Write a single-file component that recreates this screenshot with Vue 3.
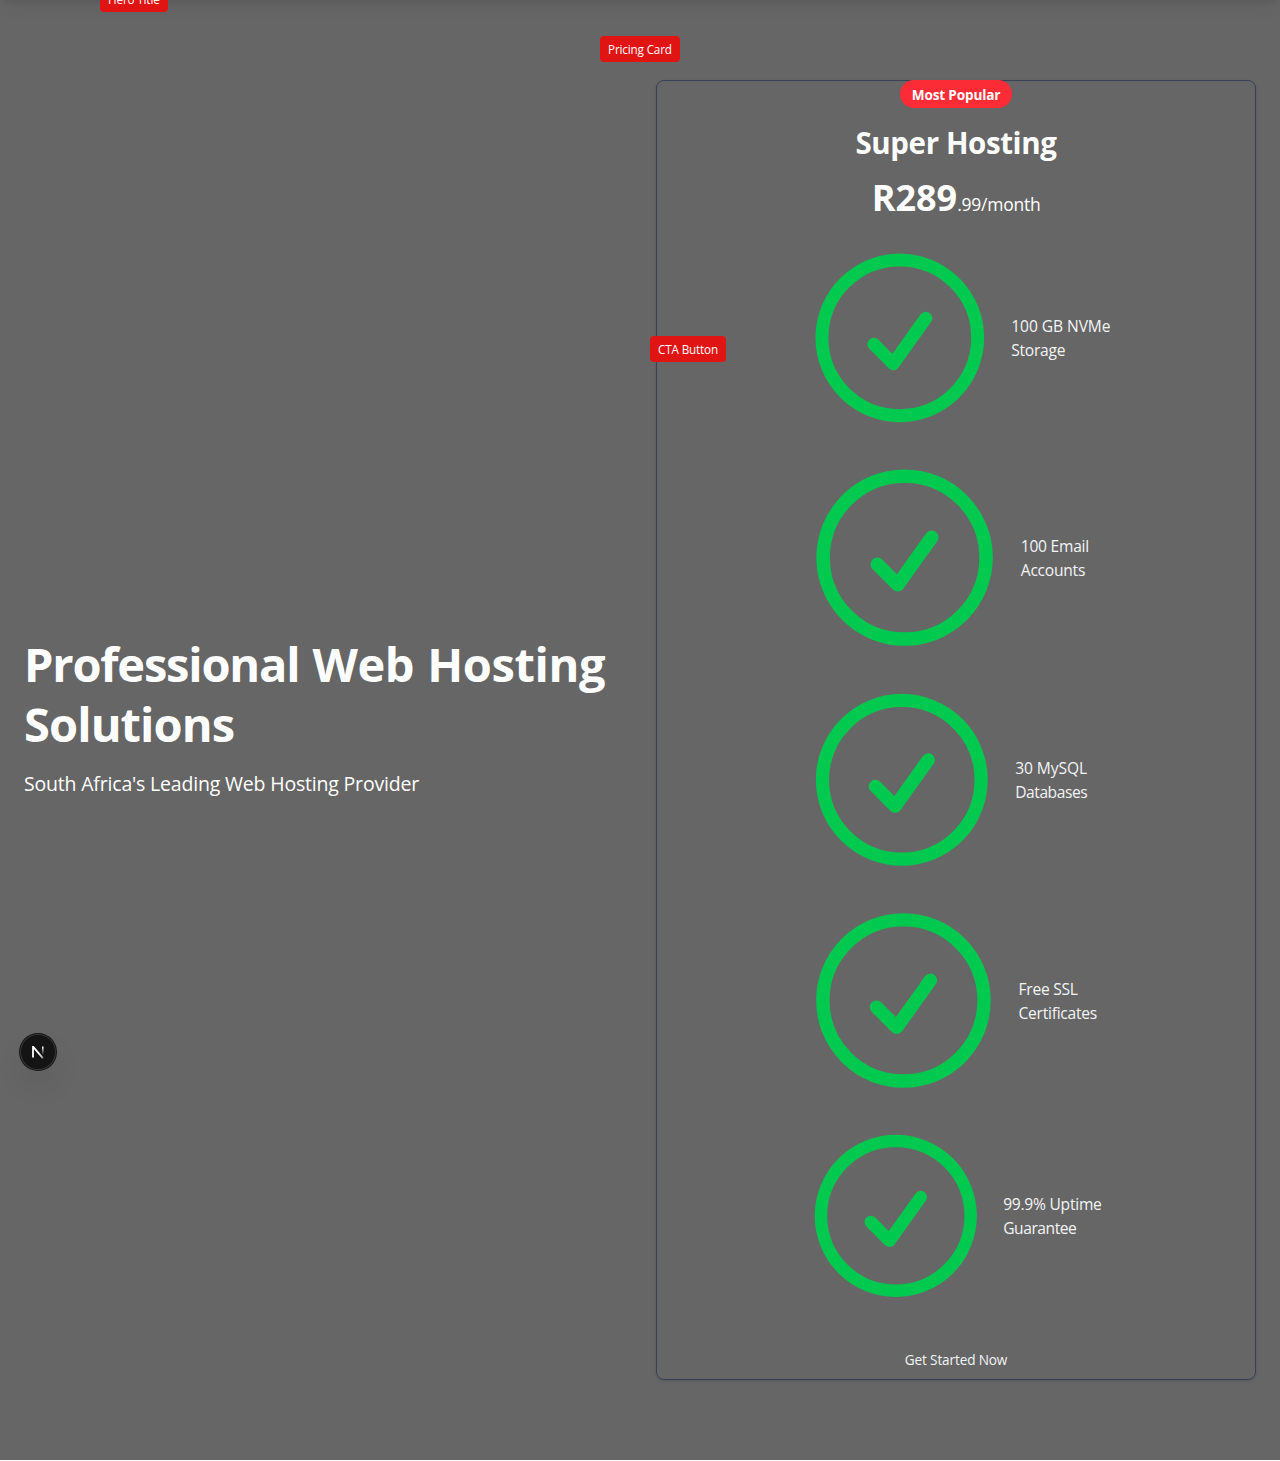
<script setup>
const features = [
  { lines: [['100 GB NVMe', 'wide'], ['Storage', 'mid']], size: 207.6 },
  { lines: [['100 Email', 'mid'], ['Accounts', 'mid']], size: 217.2 },
  { lines: [['30 MySQL', 'wide'], ['Databases', 'tight']], size: 211.6 },
  { lines: [['Free SSL', 'mid'], ['Certificates', 'mid']], size: 214.9 },
  { lines: [['99.9% Uptime', 'mid'], ['Guarantee', 'tight']], size: 199.6 },
]
</script>

<template>
  <main class="page">
    <div class="header-shadow"></div>
    <section class="hero">
      <h1><span class="first">Professional</span> Web Hosting<br /><span class="second">Solutions</span></h1>
      <p class="lead">South Africa's Leading Web Hosting Provider</p>
    </section>
    <section class="card">
      <div class="badge">Most Popular</div>
      <h2>Super Hosting</h2>
      <div class="price"><span class="amount">R289</span><span class="period">.99/month</span></div>
      <ul>
        <li v-for="f in features" :key="f.size">
          <svg :width="f.size" :height="f.size" viewBox="0 0 24 24" fill="none" stroke="currentColor" stroke-width="1.5" stroke-linecap="round" stroke-linejoin="round">
            <path d="M9 12.75 11.25 15 15 9.75M21 12a9 9 0 1 1-18 0 9 9 0 0 1 18 0Z" />
          </svg>
          <div class="label">
            <div v-for="[text, fit] in f.lines" :key="text" :class="fit">{{ text }}</div>
          </div>
        </li>
      </ul>
      <button type="button">Get Started Now</button>
    </section>
    <div class="tag tag-title">Hero Title</div>
    <div class="tag tag-card">Pricing Card</div>
    <div class="tag tag-cta">CTA Button</div>
    <div class="dev">
      <svg width="14" height="14" viewBox="0 0 14 14" fill="none">
        <defs>
          <linearGradient id="fade-a" x1="8" y1="8" x2="12.6" y2="13.6" gradientUnits="userSpaceOnUse">
            <stop stop-color="#fff" /><stop offset="0.7" stop-color="#fff" stop-opacity="0.7" /><stop offset="1" stop-color="#fff" stop-opacity="0.1" />
          </linearGradient>
          <linearGradient id="fade-b" x1="11" y1="1.6" x2="11" y2="10" gradientUnits="userSpaceOnUse">
            <stop stop-color="#fff" /><stop offset="1" stop-color="#fff" stop-opacity="0" />
          </linearGradient>
        </defs>
        <path d="M2 12.6V1.8h.3L12.2 13.6" stroke="url(#fade-a)" stroke-width="1.8" />
        <path d="M11.8 1.4V10" stroke="url(#fade-b)" stroke-width="1.6" />
      </svg>
    </div>
  </main>
</template>

<style>
body {
  margin: 0;
  background: #fff;
}
</style>

<style scoped>
.page {
  position: relative;
  box-sizing: border-box;
  height: 1460px;
  padding: 80px 24px;
  display: grid;
  grid-template-columns: 600px 600px;
  gap: 32px;
  overflow: hidden;
  background: #666;
  color: #fff;
  font-family: 'Open Sans', 'Noto Sans', sans-serif;
}
.header-shadow {
  position: absolute;
  top: -10px;
  left: 0;
  right: 0;
  height: 10px;
  box-shadow: 0 10px 15px -3px rgba(0, 0, 0, 0.12), 0 4px 6px -4px rgba(0, 0, 0, 0.35);
}
.hero {
  align-self: center;
  padding-bottom: 28px;
}
h1 {
  margin: 0;
  font-size: 47px;
  line-height: 60px;
  font-weight: 700;
  letter-spacing: -0.4px;
  word-spacing: 1.3px;
  white-space: nowrap;
}
.first {
  letter-spacing: -1.2px;
}
.second {
  letter-spacing: -0.9px;
}
.lead {
  margin: 16px 0 0;
  font-size: 19.5px;
  line-height: 28px;
  letter-spacing: -0.19px;
  white-space: nowrap;
}
.card {
  box-sizing: border-box;
  width: 600px;
  height: 1300px;
  border: 1px solid #364156;
  border-radius: 8px;
  display: flex;
  flex-direction: column;
  align-items: center;
  box-shadow: 0 1px 3px rgba(0, 0, 0, 0.15);
}
.badge {
  box-sizing: border-box;
  width: 112px;
  height: 28px;
  margin-top: -1px;
  border-radius: 14px;
  background: #fb2c36;
  font-size: 13.6px;
  font-weight: 700;
  line-height: 30px;
  letter-spacing: -0.17px;
  text-align: center;
  white-space: nowrap;
}
h2 {
  margin: 17px 0 0;
  font-size: 29.5px;
  line-height: 36px;
  font-weight: 700;
  letter-spacing: -0.4px;
}
.price {
  display: flex;
  align-items: baseline;
  margin-top: 17px;
  height: 40px;
  line-height: 40px;
}
.amount {
  font-size: 36px;
  font-weight: 700;
}
.period {
  font-size: 17.5px;
  letter-spacing: -0.25px;
}
ul {
  list-style: none;
  width: 320px;
  margin: 15.5px 0 0;
  padding: 0;
  display: flex;
  flex-direction: column;
  gap: 7.8px;
}
li {
  display: flex;
  align-items: center;
  gap: 7.6px;
}
li svg {
  flex: none;
  display: block;
  color: #00c950;
}
.label {
  padding-top: 0.8px;
  font-size: 15.6px;
  line-height: 24px;
  color: #f3f4f6;
  white-space: nowrap;
}
.wide {
  letter-spacing: -0.07px;
}
.mid {
  letter-spacing: -0.25px;
}
.tight {
  letter-spacing: -0.45px;
}
button {
  margin: 24px 0 0;
  padding: 0;
  height: 40px;
  border: 0;
  background: none;
  color: #f3f4f6;
  font: 13.6px/40px 'Open Sans', 'Noto Sans', sans-serif;
  letter-spacing: -0.14px;
}
.tag {
  position: absolute;
  box-sizing: border-box;
  height: 26px;
  padding: 0 8px;
  border-radius: 4px;
  background: #e11414;
  font-size: 11.7px;
  line-height: 26px;
  letter-spacing: -0.15px;
  white-space: nowrap;
}
.tag-title {
  left: 100px;
  top: -14px;
  width: 68px;
}
.tag-card {
  left: 600px;
  top: 36px;
  width: 80px;
}
.tag-cta {
  left: 650px;
  top: 336px;
  width: 76px;
}
.dev {
  position: absolute;
  left: 20px;
  top: 1034px;
  width: 36px;
  height: 36px;
  border-radius: 50%;
  display: flex;
  align-items: center;
  justify-content: center;
  background: #141414;
  box-shadow: 0 0 0 1px #171717, inset 0 0 0 1px #363636, 0 16px 32px -8px rgba(0, 0, 0, 0.24);
}
</style>
